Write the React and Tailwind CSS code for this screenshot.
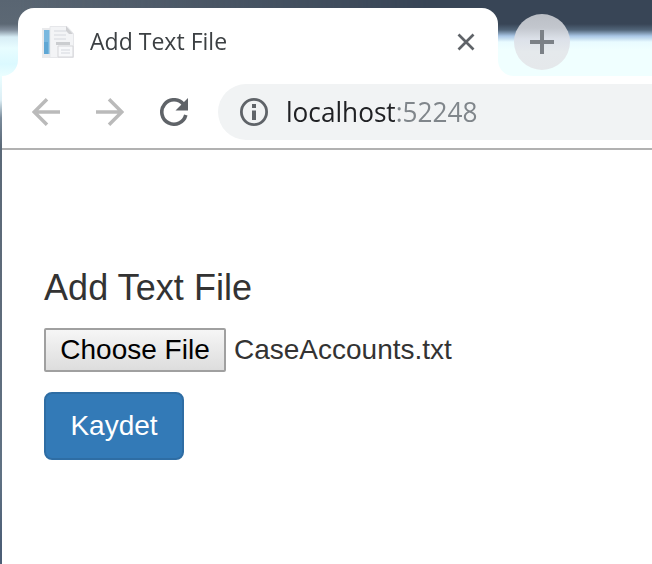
function Favicon() {
  return (
    <svg className="h-8 w-8 shrink-0" viewBox="0 0 32 32">
      <path d="M0 2h8v30H0z" fill="#e9eaec" />
      <path d="M2 4h6v24H2z" fill="#79b8df" />
      <path d="M2 16h4v12H2z" fill="#5fa7d4" />
      <path d="M8 .5h17l6.5 7V31.500H8z" fill="#f3f4f6" stroke="#e6e7ea" />
      <path d="M12 5h12M12 9h12M12 13h12" stroke="#e4e6ea" strokeWidth="2" />
      <path d="M24 0l7 8h-4l-3-3z" fill="#cfd0d3" />
      <path d="M14 16h14v3H14z" fill="#cbcdd0" />
      <path d="M16 20h15v11H16z" fill="#f7f8fa" stroke="#d5d6d9" />
      <path d="M19 24h9M19 27h9" stroke="#e6e8ec" strokeWidth="2" />
    </svg>
  );
}

function Foot({ d }) {
  return (
    <svg className="h-4 w-4 shrink-0 self-end" viewBox="0 0 16 16">
      <path d={d} fill="#fff" />
    </svg>
  );
}

function TabStrip() {
  return (
    <div className="flex h-[76px] bg-[linear-gradient(to_bottom,#596572_0,#5c6874_24px,#818e9c_30px,#d7edf6_37px,#e8fdff_48px,#dbf9ff_64px,#eafeff_76px)]">
      <div className="absolute inset-x-0 top-0 h-[76px] bg-[linear-gradient(to_bottom,#384556_0,#384556_24px,#52667a_30px,#a9c6e5_36px,#e9fbff_42px,#f0ffff_50px)] [mask-image:linear-gradient(to_right,transparent_20px,black_430px)]" />
      <div className="relative flex w-full pl-0.5">
        <Foot d="M16 0v16H0C9 16 16 9 16 0z" />
        <div className="mt-2 flex w-[480px] shrink-0 items-center rounded-t-2xl bg-white pl-6 pr-[23px]">
          <Favicon />
          <span className="ml-4 mb-0.5 origin-left scale-x-[0.96] whitespace-nowrap font-['Open_Sans',sans-serif] text-[24px] leading-8 text-[#3c4043]">
            Add Text File
          </span>
          <svg className="ml-auto h-[18px] w-[18px]" viewBox="0 0 18 18">
            <path d="M1.500 1.500l15 15M16.500 1.500l-15 15" stroke="#5f6368" strokeWidth="2.700" />
          </svg>
        </div>
        <Foot d="M0 0v16h16C7 16 0 9 0 0z" />
        <div className="mt-3.5 flex h-14 w-14 items-center justify-center rounded-full bg-[linear-gradient(to_bottom,#babec5_0,#c3c7ce_14px,#dce1e9_25px,#e5e9ec_38px,#e5e8eb_56px)]">
          <svg className="h-6 w-6" viewBox="0 0 24 24">
            <path d="M12 0v24M0 12h24" stroke="#7b8086" strokeWidth="4" />
          </svg>
        </div>
      </div>
    </div>
  );
}

function Toolbar() {
  return (
    <div className="flex h-[74px] items-center border-b-2 border-[#b1b1b1] bg-white pl-[30px]">
      <svg className="h-7 w-7 shrink-0" viewBox="0 0 28 28" fill="none" stroke="#bababa" strokeWidth="3.500">
        <path d="M28 14H3M15 1.200L2.200 14L15 26.800" />
      </svg>
      <svg className="ml-9 h-7 w-7 shrink-0" viewBox="0 0 28 28" fill="none" stroke="#bababa" strokeWidth="3.500">
        <path d="M0 14h25M13 1.200L25.800 14L13 26.800" />
      </svg>
      <svg className="ml-9 h-7 w-7 shrink-0" viewBox="0 0 28 28">
        <path d="M23.500 6.300A12.200 12.200 0 1 0 25.800 17" fill="none" stroke="#5f6368" strokeWidth="3.600" />
        <path d="M28 0v12.500H15.500z" fill="#5f6368" />
      </svg>
      <div className="ml-[30px] flex h-14 grow items-center rounded-l-full bg-[#f1f3f4] pl-[22px]">
        <svg className="h-7 w-7 shrink-0" viewBox="0 0 28 28">
          <circle cx="14" cy="14" r="12.600" fill="none" stroke="#5f6368" strokeWidth="2.800" />
          <path d="M12 6h4v4h-4zM12 12.500h4V22h-4z" fill="#5f6368" />
        </svg>
        <span className="ml-[18px] origin-left scale-x-[0.97] whitespace-nowrap font-['Open_Sans',sans-serif] text-[27px] leading-9 text-[#202124]">
          localhost<span className="text-[#80868b]">:52248</span>
        </span>
      </div>
    </div>
  );
}

export default function App() {
  return (
    <div className="relative h-[564px] w-[652px] overflow-hidden bg-white font-['Liberation_Sans',Arial,sans-serif]">
      <TabStrip />
      <div className="flex h-[488px] bg-[linear-gradient(to_bottom,#eafeff_0,#dceef5_24px,#7a8b9b_42px,#5b6978_70px,#5e6b7a_220px,#607284_400px,#4c5e76_470px)] pl-0.5">
        <div className="grow bg-white">
          <Toolbar />
          <main className="flex flex-col items-start pl-[42px] pt-[118px]">
            <h1 className="h-10 whitespace-nowrap text-[36px] leading-10 tracking-[0.05px] text-[#333]">Add Text File</h1>
            <div className="mt-5 flex items-center text-[#333]">
              <button className="h-11 w-[182px] whitespace-nowrap rounded-[2px] border-2 border-[#a0a0a0] bg-linear-to-b from-[#f6f6f6] to-[#dddddd] text-[28px] leading-10 text-black">
                Choose File
              </button>
              <span className="ml-2 text-[28px] leading-10">CaseAccounts.txt</span>
            </div>
            <button className="mt-5 h-[68px] w-[140px] rounded-lg border-2 border-[#2e6da4] bg-[#337ab7] text-[28px] leading-10 text-white">
              Kaydet
            </button>
          </main>
        </div>
      </div>
    </div>
  );
}
